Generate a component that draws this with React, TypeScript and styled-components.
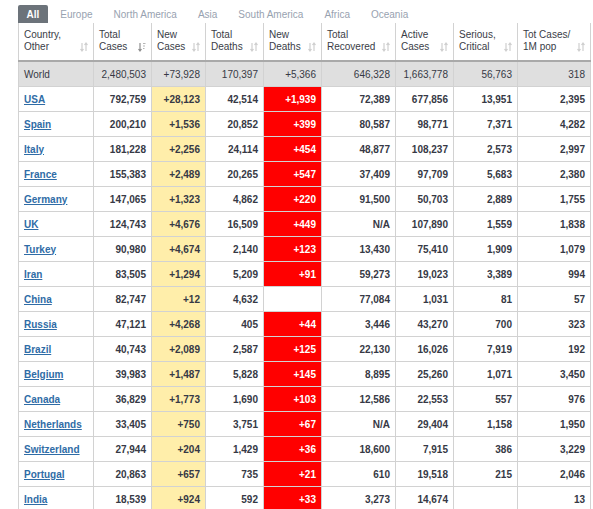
import React from 'react'
import styled, { createGlobalStyle } from 'styled-components'

const GlobalStyle = createGlobalStyle`
  html, body {
    margin: 0;
    padding: 0;
    background: #fff;
    font-family: "Liberation Sans", Arial, sans-serif;
    font-size: 10px;
    color: #363945;
  }
`

const Page = styled.div`
  padding: 5px 0 0 18px;
  width: 572px;
`

const TabBar = styled.ul`
  display: flex;
  gap: 4px;
  list-style: none;
  margin: 0;
  padding: 0;
  height: 18px;
`

const Tab = styled.li<{ active?: boolean }>`
  display: flex;
  align-items: center;
  padding: 0 8.5px;
  font-size: 10px;
  color: ${p => (p.active ? '#fff' : '#98a2b0')};
  font-weight: ${p => (p.active ? 'bold' : 'normal')};
  background: ${p => (p.active ? '#6c737a' : 'transparent')};
  border-radius: 2px 2px 0 0;
  cursor: pointer;
`

const Table = styled.table`
  border-collapse: collapse;
  table-layout: fixed;
  width: 572px;
  font-size: 10px;
`

const HeadCell = styled.th`
  border-left: 1px solid #d2d2d2;
  border-right: 1px solid #d2d2d2;
  border-bottom: 2px solid #a9a9a9;
  padding: 6px 5px 7px 5px;
  text-align: left;
  vertical-align: top;
  font-weight: normal;
  color: #3a3d47;
  line-height: 12px;
`

const HeadInner = styled.div`
  display: flex;
  justify-content: space-between;
  align-items: flex-end;
  height: 24px;
`

const Row = styled.tr<{ total?: boolean }>`
  background: ${p => (p.total ? '#dfdfdf' : '#fff')};
  font-weight: ${p => (p.total ? 'normal' : 'bold')};
`

type Tone = 'plain' | 'cases' | 'deaths' | 'country'

const Cell = styled.td<{ tone?: Tone; total?: boolean }>`
  border: 1px solid #d2d2d2;
  height: 24px;
  padding: 0 5px;
  text-align: ${p => (p.tone === 'country' ? 'left' : 'right')};
  white-space: nowrap;
  color: ${p => (p.tone === 'deaths' && !p.total ? '#fff' : '#363945')};
  background: ${p =>
    p.total ? 'transparent' : p.tone === 'cases' ? '#ffeeaa' : p.tone === 'deaths' ? '#ff0000' : 'transparent'};
`

const DeathsEmpty = styled(Cell)`
  background: #fff;
`

const CountryLink = styled.a`
  color: #2f6ca6;
  text-decoration: underline;
  font-weight: bold;
`

const SortIcon = ({ active }: { active?: boolean }) => (
  <svg width="8" height="10" viewBox="0 0 8 10" style={{ flex: 'none', marginBottom: 1 }}>
    <g stroke={active ? '#8f8f8f' : '#cfcfcf'} strokeWidth="1.2" fill="none">
      <path d="M2 1 V9 M0.5 7 L2 9 L3.5 7" />
      {active ? (
        <path d="M5 1.5 H7.5 M5 4 H7 M5 6.5 H6.5" stroke="#b5b5b5" />
      ) : (
        <path d="M6 9 V1 M4.5 3 L6 1 L7.5 3" />
      )}
    </g>
  </svg>
)

const columns = [
  { w: 75, a: 'Country,', b: 'Other' },
  { w: 58, a: 'Total', b: 'Cases', active: true },
  { w: 54, a: 'New', b: 'Cases' },
  { w: 58, a: 'Total', b: 'Deaths' },
  { w: 58, a: 'New', b: 'Deaths' },
  { w: 74, a: 'Total', b: 'Recovered' },
  { w: 58, a: 'Active', b: 'Cases' },
  { w: 64, a: 'Serious,', b: 'Critical' },
  { w: 73, a: 'Tot Cases/', b: '1M pop' },
]

const tabs = ['All', 'Europe', 'North America', 'Asia', 'South America', 'Africa', 'Oceania']

const world = ['World', '2,480,503', '+73,928', '170,397', '+5,366', '646,328', '1,663,778', '56,763', '318']

const rows: string[][] = [
  ['USA', '792,759', '+28,123', '42,514', '+1,939', '72,389', '677,856', '13,951', '2,395'],
  ['Spain', '200,210', '+1,536', '20,852', '+399', '80,587', '98,771', '7,371', '4,282'],
  ['Italy', '181,228', '+2,256', '24,114', '+454', '48,877', '108,237', '2,573', '2,997'],
  ['France', '155,383', '+2,489', '20,265', '+547', '37,409', '97,709', '5,683', '2,380'],
  ['Germany', '147,065', '+1,323', '4,862', '+220', '91,500', '50,703', '2,889', '1,755'],
  ['UK', '124,743', '+4,676', '16,509', '+449', 'N/A', '107,890', '1,559', '1,838'],
  ['Turkey', '90,980', '+4,674', '2,140', '+123', '13,430', '75,410', '1,909', '1,079'],
  ['Iran', '83,505', '+1,294', '5,209', '+91', '59,273', '19,023', '3,389', '994'],
  ['China', '82,747', '+12', '4,632', '', '77,084', '1,031', '81', '57'],
  ['Russia', '47,121', '+4,268', '405', '+44', '3,446', '43,270', '700', '323'],
  ['Brazil', '40,743', '+2,089', '2,587', '+125', '22,130', '16,026', '7,919', '192'],
  ['Belgium', '39,983', '+1,487', '5,828', '+145', '8,895', '25,260', '1,071', '3,450'],
  ['Canada', '36,829', '+1,773', '1,690', '+103', '12,586', '22,553', '557', '976'],
  ['Netherlands', '33,405', '+750', '3,751', '+67', 'N/A', '29,404', '1,158', '1,950'],
  ['Switzerland', '27,944', '+204', '1,429', '+36', '18,600', '7,915', '386', '3,229'],
  ['Portugal', '20,863', '+657', '735', '+21', '610', '19,518', '215', '2,046'],
  ['India', '18,539', '+924', '592', '+33', '3,273', '14,674', '', '13'],
]

const toneFor = (i: number): Tone => (i === 0 ? 'country' : i === 2 ? 'cases' : i === 4 ? 'deaths' : 'plain')

const renderCells = (values: string[], total?: boolean) =>
  values.map((v, i) => {
    const tone = toneFor(i)
    if (tone === 'deaths' && !total && v === '') return <DeathsEmpty key={i} tone="plain" />
    return (
      <Cell key={i} tone={tone} total={total}>
        {tone === 'country' && !total ? <CountryLink href="#">{v}</CountryLink> : v}
      </Cell>
    )
  })

export default function App() {
  return (
    <Page>
      <GlobalStyle />
      <TabBar>
        {tabs.map((t, i) => (
          <Tab key={t} active={i === 0}>{t}</Tab>
        ))}
      </TabBar>
      <Table>
        <colgroup>
          {columns.map((c, i) => (
            <col key={i} style={{ width: c.w }} />
          ))}
        </colgroup>
        <thead>
          <tr>
            {columns.map((c, i) => (
              <HeadCell key={i}>
                <HeadInner>
                  <span>
                    {c.a}
                    <br />
                    {c.b}
                  </span>
                  <SortIcon active={c.active} />
                </HeadInner>
              </HeadCell>
            ))}
          </tr>
        </thead>
        <tbody>
          <Row total>{renderCells(world, true)}</Row>
          {rows.map(r => (
            <Row key={r[0]}>{renderCells(r)}</Row>
          ))}
        </tbody>
      </Table>
    </Page>
  )
}
